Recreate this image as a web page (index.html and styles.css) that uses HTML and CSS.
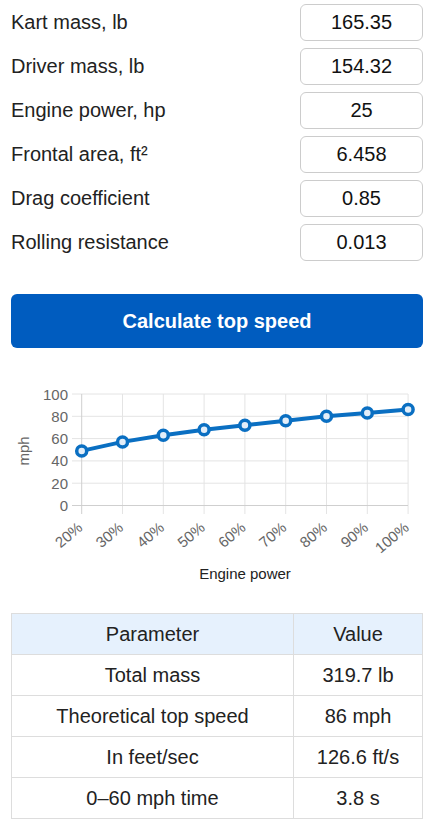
FILE: index.html
```html
<!DOCTYPE html>
<html lang="en">
<head>
  <meta charset="UTF-8" />
  <meta name="viewport" content="width=device-width, initial-scale=1.0"/>
  <title>Kart Top Speed Calculator</title>
  <link rel="stylesheet" href="styles.css">
</head>
<body>

  <main class="calc">
    <div class="fields">
      <label class="field">
        <span class="field-label">Kart mass, lb</span>
        <input class="field-input" type="text" value="165.35">
      </label>
      <label class="field">
        <span class="field-label">Driver mass, lb</span>
        <input class="field-input" type="text" value="154.32">
      </label>
      <label class="field">
        <span class="field-label">Engine power, hp</span>
        <input class="field-input" type="text" value="25">
      </label>
      <label class="field">
        <span class="field-label">Frontal area, ft²</span>
        <input class="field-input" type="text" value="6.458">
      </label>
      <label class="field">
        <span class="field-label">Drag coefficient</span>
        <input class="field-input" type="text" value="0.85">
      </label>
      <label class="field">
        <span class="field-label">Rolling resistance</span>
        <input class="field-input" type="text" value="0.013">
      </label>
    </div>

    <button class="calc-btn" type="button">Calculate top speed</button>

    <!-- speed vs engine power chart, drawn in page coordinates -->
    <svg class="chart" width="412" height="210" viewBox="11 380 412 210">
      <g class="grid">
        <line x1="72" y1="394" x2="408" y2="394"/>
        <line x1="72" y1="416.3" x2="408" y2="416.3"/>
        <line x1="72" y1="438.6" x2="408" y2="438.6"/>
        <line x1="72" y1="460.9" x2="408" y2="460.9"/>
        <line x1="72" y1="483.2" x2="408" y2="483.2"/>
        <line x1="122.5" y1="394" x2="122.5" y2="514"/>
        <line x1="163.3" y1="394" x2="163.3" y2="514"/>
        <line x1="204.1" y1="394" x2="204.1" y2="514"/>
        <line x1="244.9" y1="394" x2="244.9" y2="514"/>
        <line x1="285.7" y1="394" x2="285.7" y2="514"/>
        <line x1="326.5" y1="394" x2="326.5" y2="514"/>
        <line x1="367.3" y1="394" x2="367.3" y2="514"/>
        <line x1="408.1" y1="394" x2="408.1" y2="514"/>
      </g>
      <g class="axis">
        <line x1="72" y1="505.5" x2="408" y2="505.5"/>
        <line x1="81.7" y1="394" x2="81.7" y2="514"/>
      </g>

      <g class="y-ticks">
        <text x="68" y="399.5">100</text>
        <text x="68" y="421.8">80</text>
        <text x="68" y="444.1">60</text>
        <text x="68" y="466.4">40</text>
        <text x="68" y="488.7">20</text>
        <text x="68" y="511">0</text>
      </g>
      <g class="x-ticks">
        <text transform="translate(80 525) rotate(-40)">20%</text>
        <text transform="translate(120.8 525) rotate(-40)">30%</text>
        <text transform="translate(161.6 525) rotate(-40)">40%</text>
        <text transform="translate(202.4 525) rotate(-40)">50%</text>
        <text transform="translate(243.2 525) rotate(-40)">60%</text>
        <text transform="translate(284 525) rotate(-40)">70%</text>
        <text transform="translate(324.8 525) rotate(-40)">80%</text>
        <text transform="translate(365.6 525) rotate(-40)">90%</text>
        <text transform="translate(406.4 525) rotate(-40)">100%</text>
      </g>
      <text class="y-title" transform="translate(29 451) rotate(-90)">mph</text>
      <text class="x-title" x="245" y="579">Engine power</text>

      <polyline class="series" points="81.7,450.9 122.5,441.9 163.3,435.3 204.1,429.7 244.9,425.2 285.7,420.8 326.5,416.3 367.3,413 408.1,409.6"/>
      <g class="dots">
        <circle cx="81.7" cy="450.9" r="5"/>
        <circle cx="122.5" cy="441.9" r="5"/>
        <circle cx="163.3" cy="435.3" r="5"/>
        <circle cx="204.1" cy="429.7" r="5"/>
        <circle cx="244.9" cy="425.2" r="5"/>
        <circle cx="285.7" cy="420.8" r="5"/>
        <circle cx="326.5" cy="416.3" r="5"/>
        <circle cx="367.3" cy="413" r="5"/>
        <circle cx="408.1" cy="409.6" r="5"/>
      </g>
    </svg>

    <table class="results">
      <thead>
        <tr><th>Parameter</th><th>Value</th></tr>
      </thead>
      <tbody>
        <tr><td>Total mass</td><td>319.7 lb</td></tr>
        <tr><td>Theoretical top speed</td><td>86 mph</td></tr>
        <tr><td>In feet/sec</td><td>126.6 ft/s</td></tr>
        <tr><td>0–60 mph time</td><td>3.8 s</td></tr>
      </tbody>
    </table>
  </main>

</body>
</html>
```

FILE: styles.css
```css
* {
  box-sizing: border-box;
}

body {
  margin: 0;
  padding: 0;
  background: #fff;
  color: #222;
  font-family: 'Liberation Sans', Arial, sans-serif;
}

.calc {
  padding: 4px 7px 0 11px;
}

.fields {
  display: flex;
  flex-direction: column;
  gap: 7px;
}

.field {
  display: flex;
  justify-content: space-between;
  align-items: center;
  height: 37px;
}

.field-label {
  font-size: 20px;
  color: #222;
}

.field-input {
  width: 123px;
  height: 37px;
  border: 1px solid #ccc;
  border-radius: 6px;
  font-family: 'Liberation Sans', Arial, sans-serif;
  font-size: 20px;
  color: #111;
  text-align: center;
  padding: 0 6px;
  background: #fff;
}

.calc-btn {
  display: block;
  width: 100%;
  height: 54px;
  margin-top: 33px;
  border: none;
  border-radius: 6px;
  background-color: #005cbf;
  color: #fff;
  font-family: 'Liberation Sans', Arial, sans-serif;
  font-size: 20px;
  font-weight: bold;
  cursor: pointer;
}

.chart {
  display: block;
  margin-top: 32px;
  font-family: 'Liberation Sans', Arial, sans-serif;
}

.chart .grid line {
  stroke: #e4e4e4;
  stroke-width: 1;
}

.chart .axis line {
  stroke: #cfcfcf;
  stroke-width: 1;
}

.chart .y-ticks text {
  font-size: 15px;
  fill: #666;
  text-anchor: end;
}

.chart .x-ticks text {
  font-size: 15px;
  fill: #666;
  text-anchor: end;
  dominant-baseline: central;
}

.chart .y-title {
  font-size: 15px;
  fill: #666;
  text-anchor: middle;
}

.chart .x-title {
  font-size: 15px;
  fill: #222;
  text-anchor: middle;
}

.chart .series {
  fill: none;
  stroke: #0a6fc2;
  stroke-width: 4;
  stroke-linejoin: round;
}

.chart .dots circle {
  fill: #e3eef9;
  stroke: #0a6fc2;
  stroke-width: 3.5;
}

.results {
  width: 100%;
  margin-top: 23px;
  border-collapse: collapse;
  font-size: 20px;
  color: #222;
}

.results th,
.results td {
  border: 1px solid #ddd;
  height: 41px;
  padding: 0 8px;
  text-align: center;
  font-weight: normal;
}

.results th {
  background: #e6f1fd;
}

.results th:first-child {
  width: 282px;
}
```
